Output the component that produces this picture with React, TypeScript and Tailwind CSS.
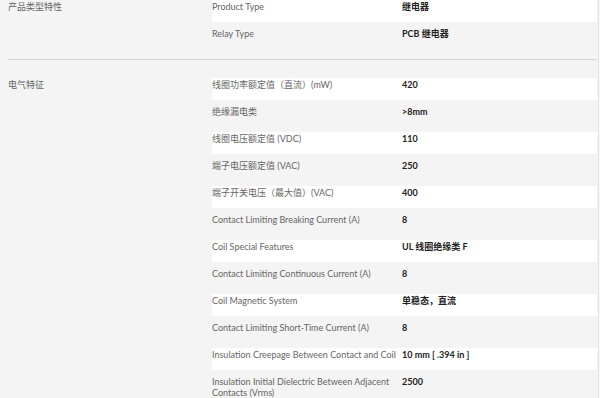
import React from 'react';

type Row = { label: string; value: string };

const sections: { title: string; rows: Row[] }[] = [
  {
    title: '产品类型特性',
    rows: [
      { label: 'Product Type', value: '继电器' },
      { label: 'Relay Type', value: 'PCB 继电器' },
    ],
  },
  {
    title: '电气特征',
    rows: [
      { label: '线圈功率额定值（直流）(mW)', value: '420' },
      { label: '绝缘漏电类', value: '>8mm' },
      { label: '线圈电压额定值 (VDC)', value: '110' },
      { label: '端子电压额定值 (VAC)', value: '250' },
      { label: '端子开关电压（最大值）(VAC)', value: '400' },
      { label: 'Contact Limiting Breaking Current (A)', value: '8' },
      { label: 'Coil Special Features', value: 'UL 线圈绝缘类 F' },
      { label: 'Contact Limiting Continuous Current (A)', value: '8' },
      { label: 'Coil Magnetic System', value: '单稳态，直流' },
      { label: 'Contact Limiting Short-Time Current (A)', value: '8' },
      { label: 'Insulation Creepage Between Contact and Coil', value: '10 mm [ .394 in ]' },
      { label: 'Insulation Initial Dielectric Between Adjacent Contacts (Vrms)', value: '2500' },
    ],
  },
];

const font = { fontFamily: 'Lato, "Noto Sans CJK SC", sans-serif' };

export default function App() {
  return (
    <div className="flex h-[398px] w-[600px] overflow-hidden bg-[#f4f4f4]" style={font}>
      <div className="ml-2 w-[589px]">
        {sections.map((s, si) => (
          <div
            key={s.title}
            className={
              si === 0
                ? 'flex border-b border-[#d4d4d4] pb-[10px]'
                : 'flex pt-[18px]'
            }
          >
            <div className="w-[204px] shrink-0 pt-[1px] text-[9px] leading-[11px] text-[#666]">{s.title}</div>
            <div className="flex flex-1 flex-col gap-[5px]">
              {s.rows.map((r, i) => (
                <div
                  key={r.label}
                  className={`flex min-h-[22px] pt-[1px] text-[9px] leading-[11px] ${i % 2 === 0 ? 'bg-white' : ''}`}
                >
                  <div className="w-[190px] shrink-0 pr-[2px] text-[#666]">{r.label}</div>
                  <div className="font-bold text-[#222]">{r.value}</div>
                </div>
              ))}
            </div>
          </div>
        ))}
      </div>
      <div className="ml-auto w-[2px] border-l border-[#e2e2e2] bg-[#fafafa]" />
    </div>
  );
}
